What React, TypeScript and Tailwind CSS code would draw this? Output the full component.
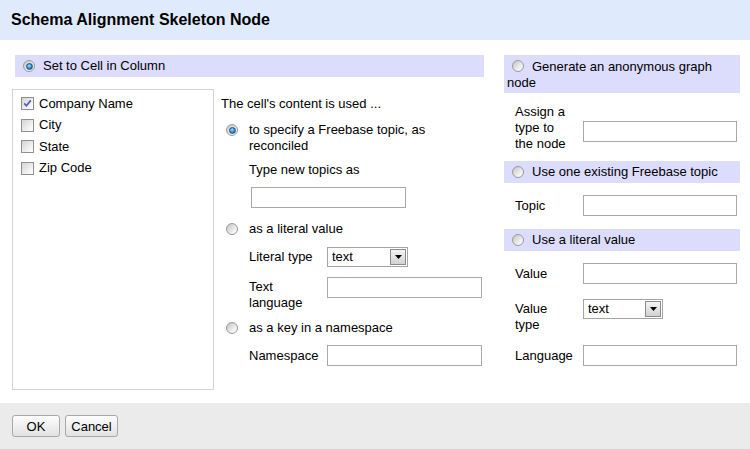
import React from "react";

const columns = [
  {name: "Company Name", checked: true},
  {name: "City", checked: false},
  {name: "State", checked: false},
  {name: "Zip Code", checked: false},
];

function Radio({checked}: {checked?: boolean}) {
  return (
    <span className="flex h-[12px] w-[12px] shrink-0 items-center justify-center rounded-full border border-[#9a9a9a] bg-[linear-gradient(135deg,#c4c4c4,#f2f2f2_70%,#ffffff)]">
      {checked && (
        <span className="h-[7px] w-[7px] rounded-full border border-[#1b4f86] bg-[radial-gradient(circle_at_40%_35%,#9be0ff,#2a8fd6_55%,#0d4f96)]" />
      )}
    </span>
  );
}

function Checkbox({checked}: {checked?: boolean}) {
  return (
    <span className="flex h-[13px] w-[13px] shrink-0 items-center justify-center border border-[#8e8f8f] bg-[linear-gradient(135deg,#d3d3d3,#f4f4f4_70%,#ffffff)]">
      {checked && (
        <svg width="9" height="9" viewBox="0 0 9 9">
          <path d="M1.2 4.4 L3.4 6.8 L7.8 1.4" stroke="#4b5cc4" strokeWidth="1.7" fill="none" />
        </svg>
      )}
    </span>
  );
}

function TextBox({className}: {className: string}) {
  return <input type="text" className={`h-[21px] shrink-0 border border-[#a9a9a9] bg-white outline-none ${className}`} />;
}

function Select({className}: {className: string}) {
  return (
    <div className={`flex h-[20px] shrink-0 items-center justify-between border border-[#a5a5a5] bg-white pl-[4px] pr-[1px] ${className}`}>
      <span>text</span>
      <span className="flex h-[16px] w-[16px] items-center justify-center border border-[#8c8c8c] bg-[linear-gradient(180deg,#f4f4f4,#d2d2d2)]">
        <svg width="7" height="4" viewBox="0 0 7 4">
          <polygon points="0,0 7,0 3.5,4" fill="#000" />
        </svg>
      </span>
    </div>
  );
}

function Button({label, className}: {label: string; className: string}) {
  return (
    <button className={`h-[22px] rounded-[3px] border border-[#a8a8a8] bg-[linear-gradient(180deg,#fdfdfd,#e2e2e2)] pt-[1px] text-[13px] text-black ${className}`}>
      {label}
    </button>
  );
}

export default function App() {
  return (
    <div className="h-[449px] w-[750px] overflow-hidden bg-white font-['Liberation_Sans',Arial,sans-serif] text-[13px] leading-[16px] text-black">
      <div className="flex h-[40px] items-center bg-[#dfebfd] pl-[11px] text-[16px] font-bold">
        Schema Alignment Skeleton Node
      </div>

      <div className="flex h-[363px] pt-[15px]">
        {/* left: set to cell in column */}
        <div className="ml-[12px] flex w-[472px] flex-col">
          <div className="ml-[3px] flex h-[22px] items-center bg-[#dcdcfc] pl-[8px]">
            <Radio checked />
            <span className="ml-[8px]">Set to Cell in Column</span>
          </div>

          <div className="mt-[12px] flex">
            <div className="h-[301px] w-[202px] border border-[#d4d4d4] pl-[8px] pt-[3px]">
              {columns.map((c) => (
                <div key={c.name} className="flex h-[21.5px] items-center gap-[5px]">
                  <Checkbox checked={c.checked} />
                  <span>{c.name}</span>
                </div>
              ))}
            </div>

            <div className="ml-[7px] flex flex-1 flex-col pt-[7px]">
              <div>The cell's content is used ...</div>

              <div className="mt-[10px] flex items-start">
                <span className="ml-[5px] mt-[2px]">
                  <Radio checked />
                </span>
                <span className="ml-[11px]">
                  to specify a Freebase topic, as
                  <br />
                  reconciled
                </span>
              </div>
              <div className="pl-[28px]">
                <div className="mt-[8px]">Type new topics as</div>
                <TextBox className="ml-[2px] mt-[9px] w-[155px]" />
              </div>

              <div className="mt-[13px] flex items-center">
                <span className="ml-[5px]">
                  <Radio />
                </span>
                <span className="ml-[11px]">as a literal value</span>
              </div>
              <div className="pl-[28px]">
                <div className="mt-[10px] flex items-center">
                  <span className="w-[78px]">Literal type</span>
                  <Select className="w-[81px]" />
                </div>
                <div className="mt-[10px] flex items-start">
                  <span className="w-[78px] pt-[2px]">
                    Text
                    <br />
                    language
                  </span>
                  <TextBox className="w-[155px]" />
                </div>
              </div>

              <div className="mt-[9px] flex items-center">
                <span className="ml-[5px]">
                  <Radio />
                </span>
                <span className="ml-[11px]">as a key in a namespace</span>
              </div>
              <div className="pl-[28px]">
                <div className="mt-[9px] flex items-center">
                  <span className="w-[78px]">Namespace</span>
                  <TextBox className="w-[155px]" />
                </div>
              </div>
            </div>
          </div>
        </div>

        {/* right: other node kinds */}
        <div className="ml-[20px] flex w-[236px] flex-col">
          <div className="bg-[#dcdcfc] pb-[2px] pl-[3px] pt-[4px]">
            <span className="ml-[5px] mr-[8px] inline-block align-[-1px]">
              <Radio />
            </span>
            Generate an anonymous graph
            <br />
            node
          </div>
          <div className="mt-[11px] flex items-start pl-[11px]">
            <span className="w-[68px]">
              Assign a
              <br />
              type to
              <br />
              the node
            </span>
            <TextBox className="mt-[17px] w-[154px]" />
          </div>

          <div className="mt-[9px] flex h-[22px] items-center bg-[#dcdcfc] pl-[8px]">
            <Radio />
            <span className="ml-[8px]">Use one existing Freebase topic</span>
          </div>
          <div className="mt-[12px] flex items-center pl-[11px]">
            <span className="w-[68px]">Topic</span>
            <TextBox className="w-[154px]" />
          </div>

          <div className="mt-[13px] flex h-[22px] items-center bg-[#dcdcfc] pl-[8px]">
            <Radio />
            <span className="ml-[8px]">Use a literal value</span>
          </div>
          <div className="mt-[12px] flex items-center pl-[11px]">
            <span className="w-[68px]">Value</span>
            <TextBox className="w-[154px]" />
          </div>
          <div className="mt-[15px] flex items-start pl-[11px]">
            <span className="w-[68px] pt-[2px]">
              Value
              <br />
              type
            </span>
            <Select className="w-[80px]" />
          </div>
          <div className="mt-[12px] flex items-center pl-[11px]">
            <span className="w-[68px]">Language</span>
            <TextBox className="w-[154px]" />
          </div>
        </div>
      </div>

      <div className="flex h-[46px] gap-[5px] bg-[#ebebeb] pl-[12px] pt-[12px]">
        <Button label="OK" className="w-[48px]" />
        <Button label="Cancel" className="w-[53px]" />
      </div>
    </div>
  );
}
